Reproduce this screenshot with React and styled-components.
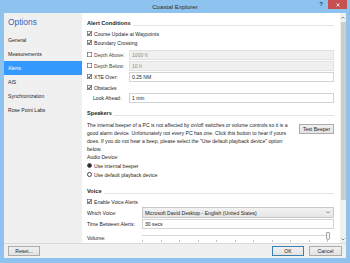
import React from 'react';
import styled, { createGlobalStyle } from 'styled-components';

const GlobalStyle = createGlobalStyle`
  html, body {
    margin: 0;
    padding: 0;
  }
  body {
    width: 350px;
    height: 263px;
    overflow: hidden;
    font-family: "Liberation Sans", Arial, sans-serif;
    color: #1e1e1e;
  }
  * { box-sizing: border-box; }
`;

const Window = styled.div`
  width: 350px;
  height: 263px;
  background: #8ec3ef;
  display: flex;
  flex-direction: column;
`;

const TitleBar = styled.div`
  height: 13px;
  display: grid;
  grid-template-columns: 1fr auto 1fr;
  align-items: start;
`;

const TitleText = styled.div`
  grid-column: 2;
  font-size: 6.2px;
  line-height: 13px;
  color: #2b2b2b;
`;

const TitleButtons = styled.div`
  grid-column: 3;
  justify-self: end;
  display: flex;
  align-items: flex-start;
  gap: 5px;
  padding-right: 3px;
`;

const HelpButton = styled.div`
  font-size: 6px;
  font-weight: bold;
  line-height: 9px;
  color: #1e3b5c;
`;

const CloseButton = styled.div`
  width: 19px;
  height: 9px;
  background: #c75050;
  display: flex;
  align-items: center;
  justify-content: center;
`;

const Frame = styled.div`
  flex: 1;
  margin: 0 4px 5px 4px;
  background: #f0f0f0;
  display: flex;
  flex-direction: column;
`;

const Main = styled.div`
  height: 230px;
  display: flex;
`;

const Sidebar = styled.div`
  width: 78px;
  background: #f0f0f0;
  padding-top: 5px;
`;

const SideTitle = styled.div`
  font-size: 8.4px;
  line-height: 9px;
  color: #3d63b8;
  padding-left: 4px;
  margin-bottom: 6px;
`;

const SideItem = styled.div`
  height: 14px;
  line-height: 14px;
  padding-left: 4px;
  font-size: 5.1px;
  color: ${(p) => (p.$active ? '#ffffff' : '#1e1e1e')};
  background: ${(p) => (p.$active ? '#3399ff' : 'transparent')};
`;

const Content = styled.div`
  flex: 1;
  background: #ffffff;
  overflow: hidden;
  padding: 6px 6px 0 5px;
  font-size: 5.1px;
`;

const Scrollbar = styled.div`
  width: 6px;
  background: #f0f0f0;
  display: flex;
  flex-direction: column;
  align-items: center;
`;

const ScrollArrow = styled.div`
  height: 8px;
  width: 6px;
  display: flex;
  align-items: center;
  justify-content: center;
`;

const ScrollThumb = styled.div`
  width: 5px;
  height: 178px;
  background: #cdcdcd;
  margin-top: 1px;
`;

const ScrollTrack = styled.div`
  flex: 1;
`;

const Footer = styled.div`
  flex: 1;
  border-top: 1px solid #dadada;
  display: flex;
  align-items: flex-start;
  padding: 2px 4px 0 4px;
`;

const Button = styled.div`
  height: 10px;
  width: ${(p) => p.$w || 32}px;
  border: 1px solid ${(p) => (p.$primary ? '#3c7fb1' : '#acacac')};
  background: linear-gradient(#f0f0f0, #e3e3e3);
  font-size: 5.1px;
  line-height: 8px;
  text-align: center;
  color: #1e1e1e;
`;

const Spacer = styled.div`
  flex: 1;
`;

const ButtonGroup = styled.div`
  display: flex;
  gap: 5px;
`;

const SectionHead = styled.div`
  display: flex;
  align-items: flex-end;
  height: 8px;
  margin-top: ${(p) => p.$top || 0}px;
  margin-bottom: 2px;
  gap: 2px;
`;

const HeadText = styled.div`
  font-size: 5.6px;
  font-weight: bold;
  line-height: 8px;
`;

const HeadLine = styled.div`
  flex: 1;
  height: 1px;
  background: #e3e3e3;
  margin-bottom: 1px;
`;

const CheckRow = styled.div`
  height: 9px;
  display: flex;
  align-items: center;
  gap: 2px;
  margin-top: ${(p) => p.$top || 0}px;
`;

const BoxWrap = styled.div`
  width: 5px;
  height: 5px;
  flex-shrink: 0;
  display: flex;
`;

const FieldRow = styled.div`
  height: 11px;
  display: flex;
  align-items: center;
  margin-top: ${(p) => p.$top || 0}px;
`;

const FieldLabel = styled.div`
  width: ${(p) => p.$w}px;
  padding-left: ${(p) => p.$indent || 0}px;
  display: flex;
  align-items: center;
  gap: 2px;
  flex-shrink: 0;
  color: ${(p) => (p.$dim ? '#444' : '#1e1e1e')};
`;

const TextInput = styled.div`
  flex: 1;
  height: 10px;
  border: 1px solid ${(p) => (p.$disabled ? '#e2e2e2' : '#d4d4d4')};
  background: ${(p) => (p.$disabled ? '#f0f0f0' : '#ffffff')};
  color: ${(p) => (p.$disabled ? '#8d8d8d' : '#1e1e1e')};
  padding-left: 2px;
  line-height: 8px;
`;

const SelectBox = styled.div`
  flex: 1;
  height: 11px;
  border: 1px solid #c9c9c9;
  background: linear-gradient(#f2f2f2, #e6e6e6);
  padding: 0 3px 0 2px;
  display: flex;
  align-items: center;
  justify-content: space-between;
`;

const SpeakerRow = styled.div`
  display: flex;
  align-items: flex-start;
  gap: 4px;
  margin-top: 4px;
`;

const Paragraph = styled.div`
  width: 208px;
  line-height: 8px;
`;

const BeeperButton = styled(Button)`
  margin-top: 3px;
  width: 35px;
`;

const PlainRow = styled.div`
  height: 8px;
  line-height: 8px;
`;

const RadioRow = styled.div`
  height: 9px;
  display: flex;
  align-items: center;
  gap: 2px;
`;

const RadioCircle = styled.div`
  width: 5px;
  height: 5px;
  border-radius: 50%;
  border: 0.6px solid #444;
  background: #fff;
  display: flex;
  align-items: center;
  justify-content: center;
  &::after {
    content: '';
    width: 2.4px;
    height: 2.4px;
    border-radius: 50%;
    background: ${(p) => (p.$on ? '#222' : 'transparent')};
  }
`;

const SliderRow = styled.div`
  display: flex;
  margin-top: 2px;
`;

const SliderArea = styled.div`
  flex: 1;
  height: 11px;
  position: relative;
`;

const SliderTrack = styled.div`
  position: absolute;
  left: 0;
  right: 4px;
  top: 4px;
  height: 1px;
  background: #d6d6d6;
`;

const SliderThumb = styled.div`
  position: absolute;
  right: 4px;
  top: 1px;
  width: 4px;
  height: 8px;
  border: 0.6px solid #a8a8a8;
  background: #f5f5f5;
  border-radius: 0 0 2px 2px;
`;

const Ticks = styled.div`
  position: absolute;
  left: 0;
  right: 6px;
  top: 9px;
  display: flex;
  justify-content: space-between;
`;

const Tick = styled.div`
  width: 1px;
  height: 2px;
  background: #c4c4c4;
`;

// drawn at 10x so the tick stays legible at this tiny size
const Check = ({ on }) => (
  <BoxWrap>
    <svg width="5" height="5" viewBox="0 0 10 10">
      <rect x="0.6" y="0.6" width="8.8" height="8.8" fill="#fff" stroke="#555" strokeWidth="1.2" />
      {on && <path d="M2 5.2 L4.2 7.6 L8.2 2.4" stroke="#1a1a1a" strokeWidth="1.9" fill="none" />}
    </svg>
  </BoxWrap>
);

const Chevron = ({ up }) => (
  <svg width="4" height="3" viewBox="0 0 8 6">
    <path d={up ? 'M1 5 L4 2 L7 5' : 'M1 1 L4 4 L7 1'} stroke="#606060" strokeWidth="1.4" fill="none" />
  </svg>
);

const sideItems = ['General', 'Measurements', 'Alerts', 'AIS', 'Synchronization', 'Rose Point Labs'];

const App = () => {
  return (
    <Window>
      <GlobalStyle />
      <TitleBar>
        <TitleText>Coastal Explorer</TitleText>
        <TitleButtons>
          <HelpButton>?</HelpButton>
          <CloseButton>
            <svg width="4" height="4" viewBox="0 0 8 8">
              <path d="M1 1 L7 7 M7 1 L1 7" stroke="#fff" strokeWidth="1.6" />
            </svg>
          </CloseButton>
        </TitleButtons>
      </TitleBar>
      <Frame>
        <Main>
          <Sidebar>
            <SideTitle>Options</SideTitle>
            {sideItems.map((item) => (
              <SideItem key={item} $active={item === 'Alerts'}>
                {item}
              </SideItem>
            ))}
          </Sidebar>
          <Content>
            <SectionHead>
              <HeadText>Alert Conditions</HeadText>
              <HeadLine />
            </SectionHead>
            <CheckRow>
              <Check on />
              <span>Course Update at Waypoints</span>
            </CheckRow>
            <CheckRow>
              <Check on />
              <span>Boundary Crossing</span>
            </CheckRow>
            <FieldRow $top={2}>
              <FieldLabel $w={42} $dim>
                <Check />
                <span>Depth Above:</span>
              </FieldLabel>
              <TextInput $disabled>1000 ft</TextInput>
            </FieldRow>
            <FieldRow>
              <FieldLabel $w={42} $dim>
                <Check />
                <span>Depth Below:</span>
              </FieldLabel>
              <TextInput $disabled>10 ft</TextInput>
            </FieldRow>
            <FieldRow>
              <FieldLabel $w={42}>
                <Check on />
                <span>XTE Over:</span>
              </FieldLabel>
              <TextInput>0.25 NM</TextInput>
            </FieldRow>
            <CheckRow $top={1}>
              <Check on />
              <span>Obstacles</span>
            </CheckRow>
            <FieldRow>
              <FieldLabel $w={42} $indent={6}>
                <span>Look Ahead:</span>
              </FieldLabel>
              <TextInput>1 min</TextInput>
            </FieldRow>

            <SectionHead $top={6}>
              <HeadText>Speakers</HeadText>
              <HeadLine />
            </SectionHead>
            <SpeakerRow>
              <Paragraph>
                The internal beeper of a PC is not affected by on/off switches or volume controls so it is a
                good alarm device. Unfortunately not every PC has one. Click this button to hear if yours
                does. If you do not hear a beep, please select the "Use default playback device" option
                below.
              </Paragraph>
              <BeeperButton>Test Beeper</BeeperButton>
            </SpeakerRow>
            <PlainRow>Audio Device:</PlainRow>
            <RadioRow>
              <RadioCircle $on />
              <span>Use internal beeper</span>
            </RadioRow>
            <RadioRow>
              <RadioCircle />
              <span>Use default playback device</span>
            </RadioRow>

            <SectionHead $top={8}>
              <HeadText>Voice</HeadText>
              <HeadLine />
            </SectionHead>
            <CheckRow $top={1}>
              <Check on />
              <span>Enable Voice Alerts</span>
            </CheckRow>
            <FieldRow $top={1}>
              <FieldLabel $w={55}>Which Voice:</FieldLabel>
              <SelectBox>
                <span>Microsoft David Desktop - English (United States)</span>
                <Chevron />
              </SelectBox>
            </FieldRow>
            <FieldRow>
              <FieldLabel $w={55}>Time Between Alerts:</FieldLabel>
              <TextInput>30 secs</TextInput>
            </FieldRow>
            <SliderRow>
              <FieldLabel $w={55}>
                <PlainRow style={{ marginTop: 3 }}>Volume:</PlainRow>
              </FieldLabel>
              <SliderArea>
                <SliderTrack />
                <SliderThumb />
                <Ticks>
                  {Array.from({ length: 11 }).map((_, i) => (
                    <Tick key={i} />
                  ))}
                </Ticks>
              </SliderArea>
            </SliderRow>
          </Content>
          <Scrollbar>
            <ScrollArrow>
              <Chevron up />
            </ScrollArrow>
            <ScrollThumb />
            <ScrollTrack />
            <ScrollArrow>
              <Chevron />
            </ScrollArrow>
          </Scrollbar>
        </Main>
        <Footer>
          <Button>Reset...</Button>
          <Spacer />
          <ButtonGroup>
            <Button $primary>OK</Button>
            <Button $w={33}>Cancel</Button>
          </ButtonGroup>
        </Footer>
      </Frame>
    </Window>
  );
};

export default App;
